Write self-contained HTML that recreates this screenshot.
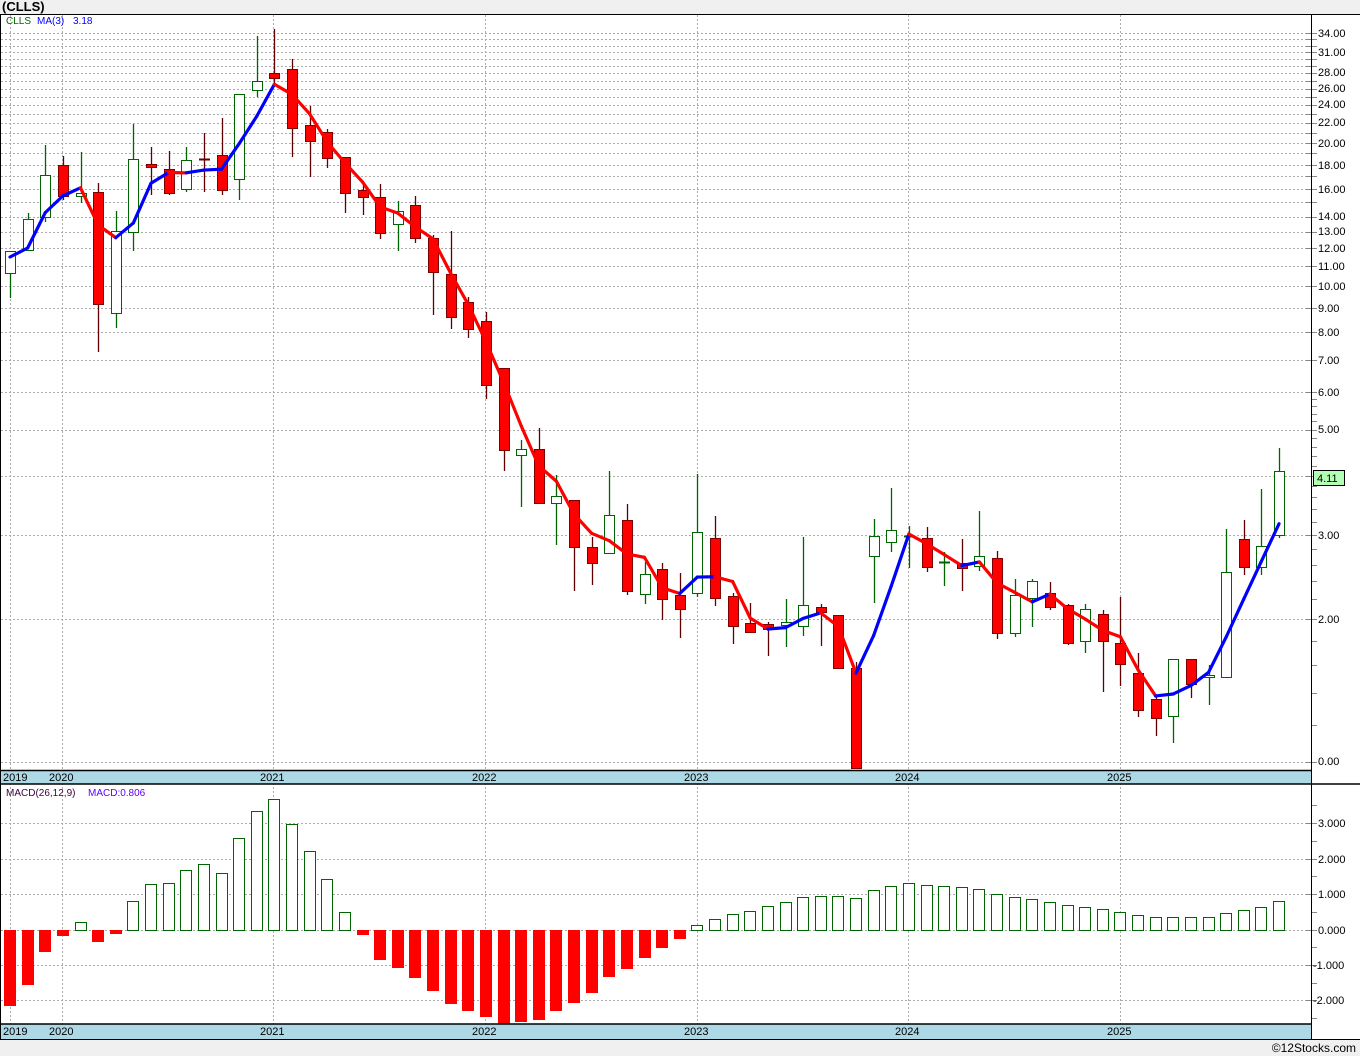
<!DOCTYPE html>
<html><head><meta charset="utf-8"><style>
html,body{margin:0;padding:0;background:#f0f0f0;}
svg{display:block;font-family:"Liberation Sans",sans-serif;}
</style></head><body>
<svg id="s" width="1360" height="1056" xmlns="http://www.w3.org/2000/svg">
<rect x="0" y="0" width="1360" height="1056" fill="#f0f0f0"/>
<rect x="0" y="14" width="1360" height="1026" fill="#fff"/>
<text x="2" y="11" font-size="13" font-weight="bold" fill="#000">(CLLS)</text>
<g id="grid"></g>
<g id="cand"></g>
<g id="ma"></g>
<g id="macd"></g>
<rect x="0" y="770" width="1311" height="14" fill="#add8e6"/>
<rect x="0" y="1024" width="1311" height="15" fill="#add8e6"/>
<line x1="0" y1="14.5" x2="1360" y2="14.5" stroke="#000"/>
<line x1="0" y1="770.5" x2="1311" y2="770.5" stroke="#000" stroke-width="1.5"/>
<line x1="0" y1="784" x2="1360" y2="784" stroke="#000" stroke-width="1.5"/>
<line x1="0" y1="1024" x2="1311" y2="1024" stroke="#000" stroke-width="1.5"/>
<line x1="0" y1="1039.5" x2="1360" y2="1039.5" stroke="#000"/>
<line x1="1311.5" y1="14" x2="1311.5" y2="1040" stroke="#000"/>
<line x1="0.5" y1="14" x2="0.5" y2="1040" stroke="#000"/>
<g font-size="11" fill="#000">
<text x="3" y="781">2019</text><text x="49" y="781">2020</text><text x="260" y="781">2021</text><text x="472" y="781">2022</text><text x="684" y="781">2023</text><text x="895" y="781">2024</text><text x="1107" y="781">2025</text>
<text x="3" y="1035">2019</text><text x="49" y="1035">2020</text><text x="260" y="1035">2021</text><text x="472" y="1035">2022</text><text x="684" y="1035">2023</text><text x="895" y="1035">2024</text><text x="1107" y="1035">2025</text>
</g>
<g font-size="11" fill="#000">
<text x="1318" y="37">34.00</text><text x="1318" y="56">31.00</text><text x="1318" y="76">28.00</text><text x="1318" y="92">26.00</text><text x="1318" y="108">24.00</text><text x="1318" y="126">22.00</text><text x="1318" y="147">20.00</text><text x="1318" y="169">18.00</text><text x="1318" y="193">16.00</text><text x="1318" y="220">14.00</text><text x="1318" y="235">13.00</text><text x="1318" y="252">12.00</text><text x="1318" y="270">11.00</text><text x="1318" y="290">10.00</text><text x="1318" y="312">9.00</text><text x="1318" y="336">8.00</text><text x="1318" y="364">7.00</text><text x="1318" y="396">6.00</text><text x="1318" y="433">5.00</text><text x="1318" y="539">3.00</text><text x="1318" y="623">2.00</text><text x="1318" y="765">0.00</text>
<text x="1318" y="827">3.000</text><text x="1318" y="863">2.000</text><text x="1318" y="898">1.000</text><text x="1318" y="934">0.000</text><text x="1313" y="969">-1.000</text><text x="1313" y="1004">-2.000</text>
</g>
<rect x="1313.5" y="470.5" width="31" height="15" fill="#b3ffb3" stroke="#000"/>
<text x="1317" y="482" font-size="11" fill="#000">4.11</text>
<text x="6" y="24" font-size="10" fill="#006400">CLLS</text>
<text x="37" y="24" font-size="10" fill="#0000ff">MA(3)</text>
<text x="73" y="24" font-size="10" fill="#0000ff">3.18</text>
<text x="6" y="796" font-size="10" fill="#400040">MACD(26,12,9)</text>
<text x="88" y="796" font-size="10" fill="#6000ff">MACD:0.806</text>
<text x="1356" y="1052" font-size="12" fill="#000" text-anchor="end">©12Stocks.com</text>
</svg>
<script>
var NS="http://www.w3.org/2000/svg";
function el(p,t,a){var e=document.createElementNS(NS,t);for(var k in a)e.setAttribute(k,a[k]);p.appendChild(e);return e;}
var G=document.getElementById('grid'),C=document.getElementById('cand'),M=document.getElementById('ma'),H=document.getElementById('macd');
function py(p){return 619-206.8*Math.log(p/2);}
for(var p=1;p<=34;p++){var y=Math.round(py(p))+0.5;el(G,'line',{x1:1,y1:y,x2:1311,y2:y,stroke:'#aaa','stroke-dasharray':'2,2'});el(G,'line',{x1:1306,y1:y,x2:1317,y2:y,stroke:'#888'});}
for(var p=1.2;p<6;p+=0.2){if(Math.abs(p-Math.round(p))<0.05)continue;var y=Math.round(py(p))+0.5;el(G,'line',{x1:1311,y1:y,x2:1317,y2:y,stroke:'#888'});}
[823,859,894,930,965,1000].forEach(function(y){el(G,'line',{x1:1,y1:y+0.5,x2:1311,y2:y+0.5,stroke:'#aaa','stroke-dasharray':'2,2'});el(G,'line',{x1:1306,y1:y+0.5,x2:1317,y2:y+0.5,stroke:'#888'});});
[805,841,876,912,947,983,1018].forEach(function(y){el(G,'line',{x1:1311,y1:y+0.5,x2:1317,y2:y+0.5,stroke:'#888'});});
[10,62,273,485,697,908,1120].forEach(function(x){el(G,'line',{x1:x+0.5,y1:15,x2:x+0.5,y2:1024,stroke:'#aaa','stroke-dasharray':'2,2'});});
// [top,bottom,high,low,up]
var D=[[251,273,251,298,1],[219,250,213,250,1],[175,217,145,222,1],[165,196,156,200,0],[193,196,152,203,1],[192,304,183,352,0],[231,313,211,328,1],[159,232,124,251,1],[164,167,147,195,0],[169,193,151,195,0],[160,189,147,192,1],[159,159,133,192,0],[155,190,118,195,0],[94,179,94,200,1],[81,90,36,97,1],[73,78,29,85,0],[69,128,59,157,0],[125,141,106,177,0],[132,158,129,168,0],[157,193,157,213,0],[190,197,185,215,0],[197,233,184,239,0],[211,224,201,251,1],[205,238,196,243,0],[238,272,235,315,0],[274,317,231,329,0],[302,329,297,338,0],[321,385,312,399,0],[368,450,368,471,0],[449,455,440,507,1],[449,503,428,503,0],[496,503,475,545,1],[500,547,500,591,0],[547,563,537,585,0],[515,553,471,553,1],[520,591,504,595,0],[574,594,562,604,1],[569,599,563,620,0],[595,609,573,638,0],[532,593,474,597,1],[538,598,516,606,0],[596,626,593,644,0],[623,632,603,632,0],[624,629,622,656,0],[622,625,599,647,1],[605,626,537,636,1],[607,612,604,646,0],[615,668,615,668,0],[668,768,662,768,0],[536,556,519,603,1],[530,542,488,552,1],[536,536,526,568,1],[538,567,527,572,0],[562,562,552,586,1],[563,568,539,591,0],[556,566,511,571,1],[558,633,551,639,0],[595,633,579,637,1],[581,598,579,627,1],[593,607,582,610,0],[605,643,604,645,0],[609,641,604,653,1],[614,641,610,692,0],[643,664,597,686,0],[673,710,653,717,0],[699,718,695,736,0],[659,716,659,743,1],[659,684,659,698,0],[675,677,665,705,1],[572,677,529,677,1],[539,567,520,575,0],[546,567,489,575,1],[471,535,448,538,1]];
function X(i){return 10+17.625*i;}
var closes=[];
D.forEach(function(d,i){var x=Math.round(X(i))+0.5,up=d[4];var wc=up?'#006400':'#600000';
el(C,'line',{x1:x,y1:d[2],x2:x,y2:d[3],stroke:wc,'stroke-width':1.3});
var h=Math.max(d[1]-d[0],1.5);
if(d[1]-d[0]<2){el(C,'line',{x1:x-5.5,y1:d[0]+0.5,x2:x+5.5,y2:d[0]+0.5,stroke:wc,'stroke-width':2});}
else el(C,'rect',{x:x-5,y:d[0]+0.5,width:10,height:h,fill:up?'#fff':'#ff0000',stroke:up?'#006400':'#800000','stroke-width':1});
var cy=up?d[0]:d[1];closes.push(2*Math.exp((619-cy)/206.8));});
var pts=[];for(var i=0;i<closes.length;i++){var s=0,n=0;for(var j=Math.max(0,i-2);j<=i;j++){s+=closes[j];n++;}pts.push([X(i),py(s/n)]);}
pts[0][1]=257;pts[1][1]=248;
for(var i=1;i<pts.length;i++){var c=pts[i][1]<pts[i-1][1]?'#0000ff':'#ff0000';el(M,'line',{x1:pts[i-1][0],y1:pts[i-1][1],x2:pts[i][0],y2:pts[i][1],stroke:c,'stroke-width':3.2,'stroke-linecap':'round'});}
var B=[1006,985,952,936,922,942,934,901,884,883,870,864,873,838,811,799,824,851,879,912,935,960,968,978,991,1004,1011,1017,1024,1022,1020,1011,1003,993,977,969,958,948,939,925,919,914,911,906,902,897,896,896,898,890,886,883,885,886,887,889,894,897,899,902,905,907,909,912,915,917,917,917,917,913,910,907,901];
B.forEach(function(b,i){var x=Math.round(X(i));if(b<930){el(H,'rect',{x:x-5.5,y:b+0.5,width:11,height:930-b,fill:'#fff',stroke:'#006400'});}else{el(H,'rect',{x:x-6,y:930,width:12,height:b-930,fill:'#ff0000'});}});
</script>
</body></html>
